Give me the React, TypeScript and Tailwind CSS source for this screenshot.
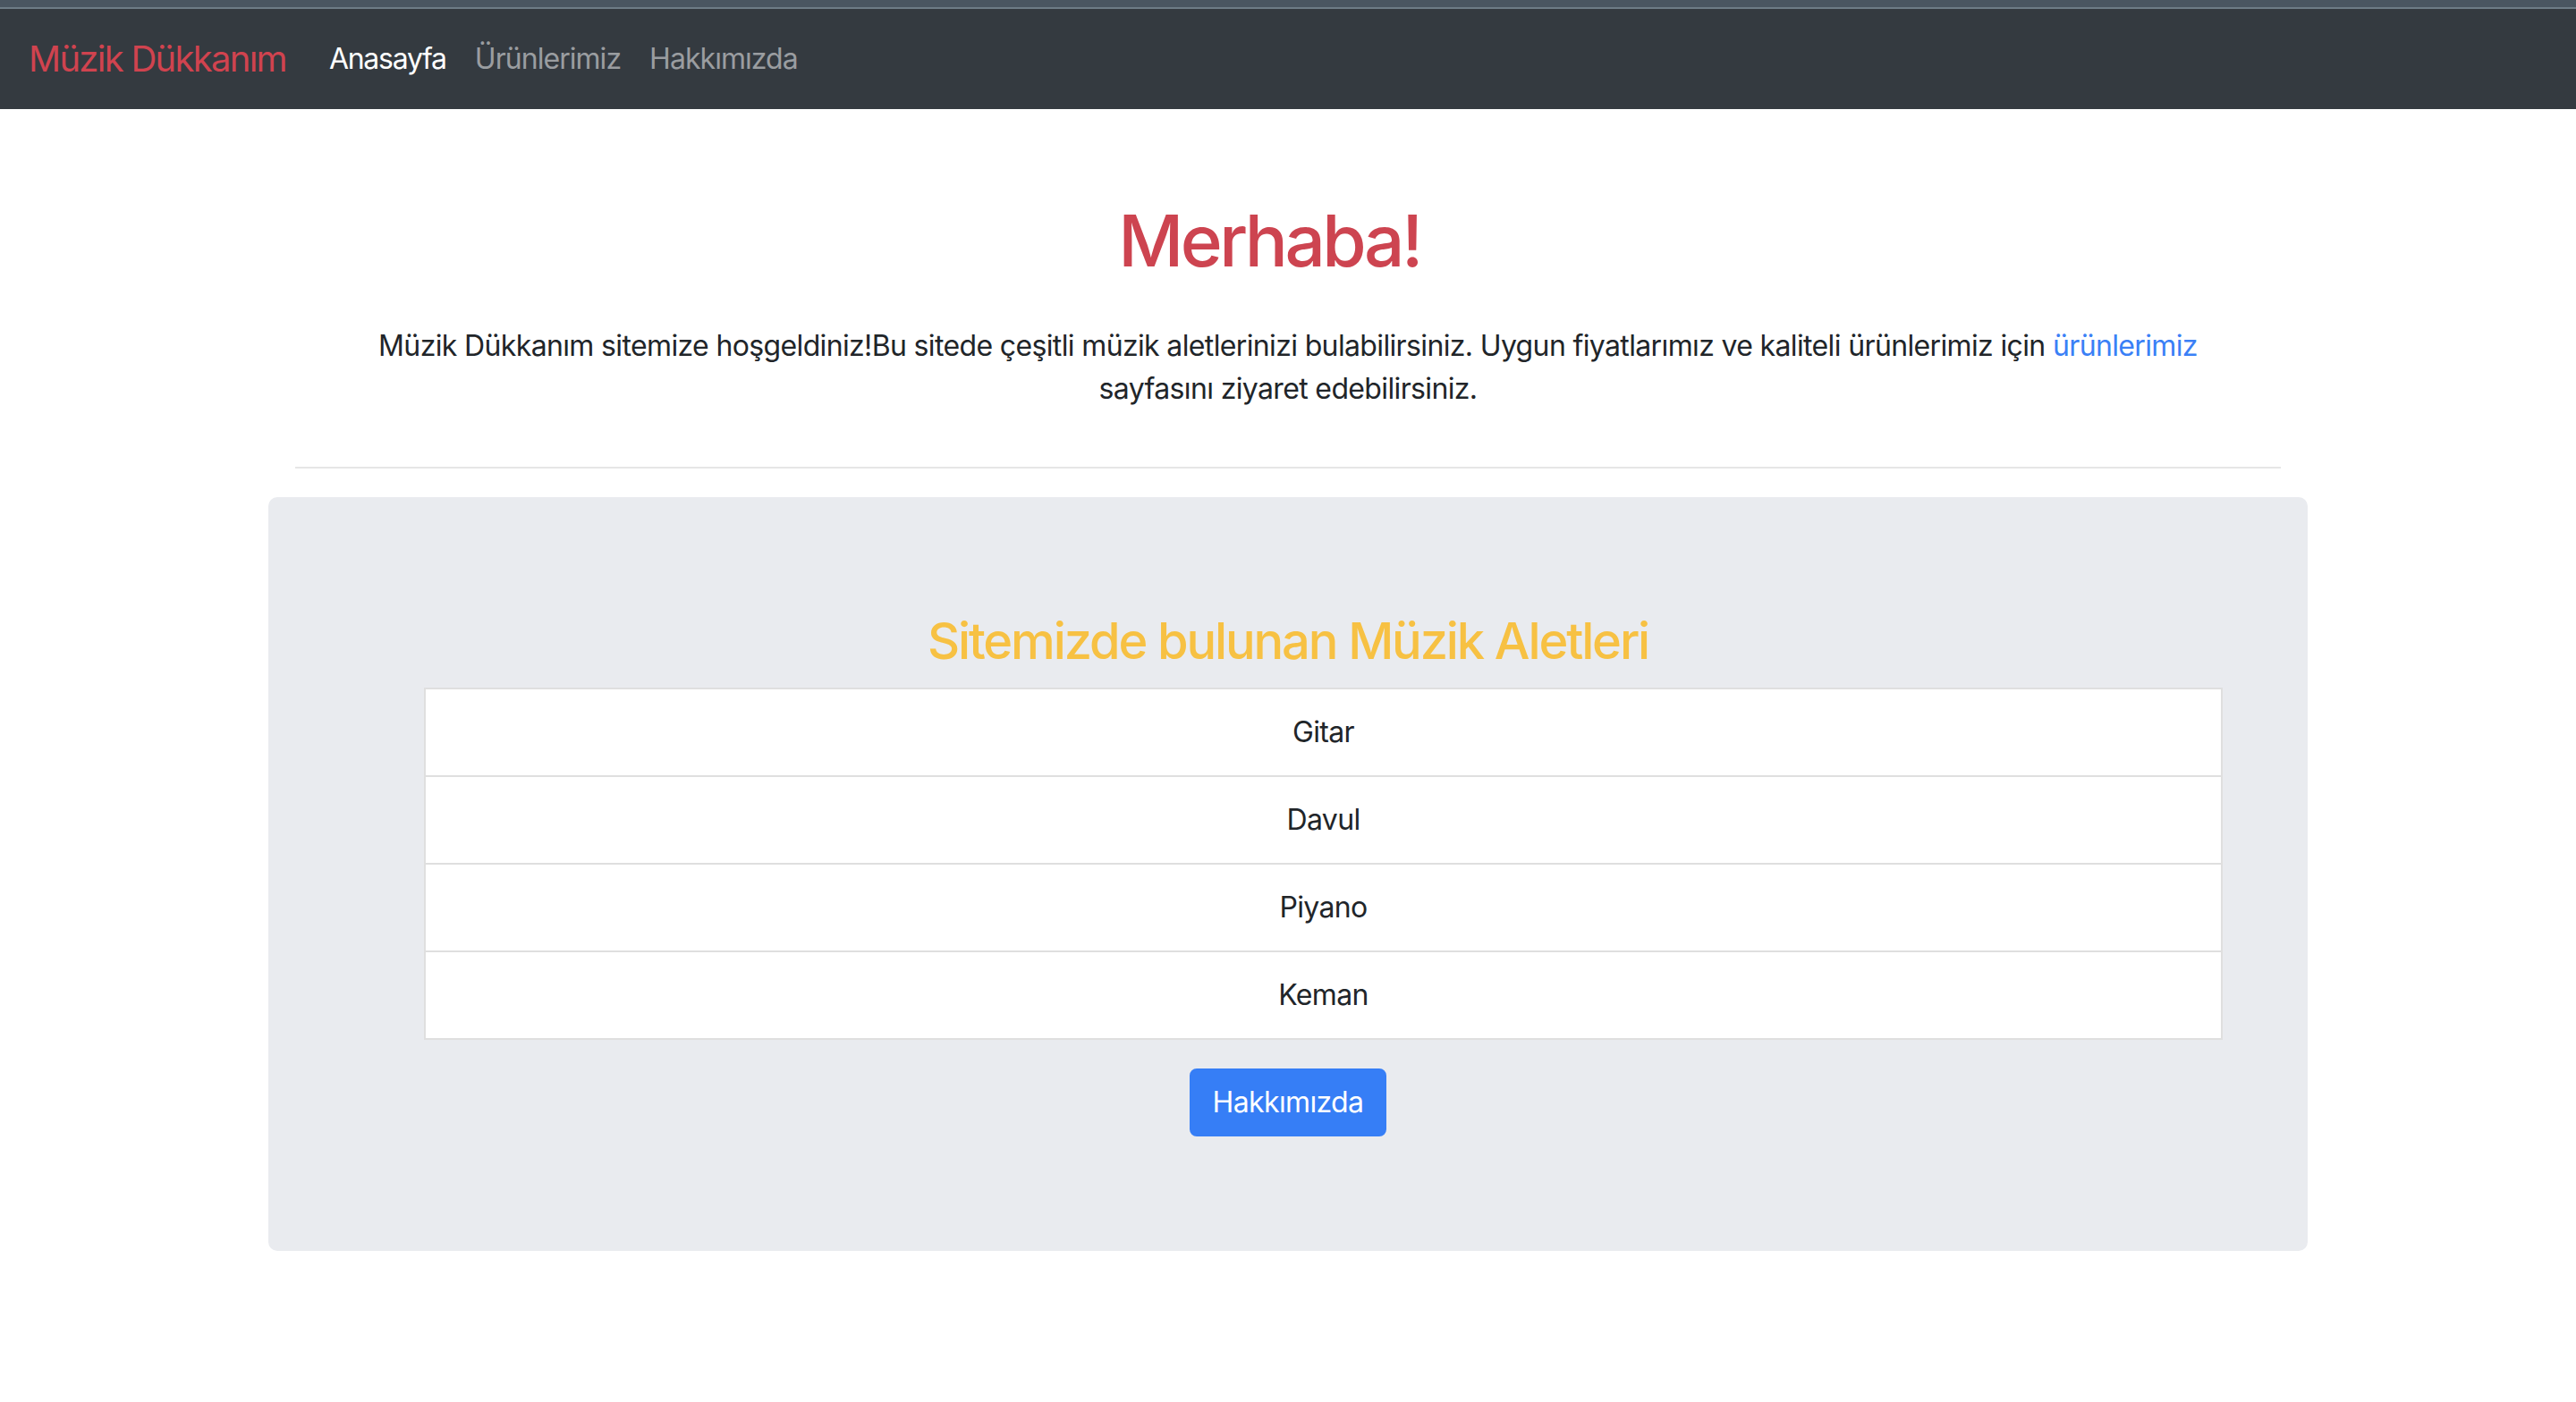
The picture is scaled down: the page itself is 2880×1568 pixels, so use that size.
import type { ReactNode } from 'react';

const navLinks = [
  { label: 'Anasayfa', active: true },
  { label: 'Ürünlerimiz', active: false },
  { label: 'Hakkımızda', active: false },
];

const instruments = ['Gitar', 'Davul', 'Piyano', 'Keman'];

const NavLink = ({ children, active }: { children: ReactNode; active: boolean }) => (
  <li>
    <a
      href="#"
      className={
        active
          ? 'block px-[16px] text-[32px] leading-[48px] tracking-[-0.04em] text-white'
          : 'block px-[16px] text-[32px] leading-[48px] tracking-[-0.03em] text-[#9a9da0]'
      }
    >
      {children}
    </a>
  </li>
);

export default function App() {
  return (
    <div className="min-h-screen bg-white font-['Inter','Liberation_Sans',sans-serif] text-[#212529]">
      <div className="h-[8px] bg-[#4a5661]" />
      <div className="h-[2px] bg-[#6e7c86]" />

      <nav className="flex h-[112px] items-center bg-[#343a40] px-[32px]">
        <a href="#" className="mr-[32px] text-[40px] leading-[60px] tracking-[-0.043em] text-[#d0434f]">
          Müzik Dükkanım
        </a>
        <ul className="flex">
          {navLinks.map((link) => (
            <NavLink key={link.label} active={link.active}>
              {link.label}
            </NavLink>
          ))}
        </ul>
      </nav>

      <main className="mx-auto w-[2280px]">
        <div className="px-[30px] text-center">
          <h1 className="mt-[99px] pr-[42px] text-[80px] font-medium leading-[96px] tracking-[-0.044em] text-[#cd4450]">
            Merhaba!
          </h1>
          <p className="mt-[46px] text-[32px] leading-[48px] tracking-[-0.02em]">
            Müzik Dükkanım sitemize hoşgeldiniz!Bu sitede çeşitli müzik aletlerinizi bulabilirsiniz. Uygun fiyatlarımız
            ve kaliteli ürünlerimiz için{' '}
            <a href="#" className="text-[#3a80f6]">
              ürünlerimiz
            </a>
            <br />
            sayfasını ziyaret edebilirsiniz.
          </p>
          <hr className="mt-[63px] mb-[32px] border-t-2 border-[#e6e6e6]" />
        </div>

        <section className="flex flex-col items-center rounded-[10px] bg-[#e9ebef] px-[64px] py-[128px]">
          <h3 className="mb-[18px] text-[56px] font-medium leading-[67px] tracking-[-0.038em] text-[#f7c143]">
            Sitemizde bulunan Müzik Aletleri
          </h3>
          <div className="w-full pl-[110px] pr-[31px]">
            <ul className="border-2 border-[#dfdfdf] bg-white">
              {instruments.map((name, i) => (
                <li
                  key={name}
                  className={
                    i === 0
                      ? 'py-[24px] text-center text-[32px] leading-[48px] tracking-[-0.02em]'
                      : 'border-t-2 border-[#dfdfdf] py-[24px] text-center text-[32px] leading-[48px] tracking-[-0.02em]'
                  }
                >
                  {name}
                </li>
              ))}
            </ul>
          </div>
          <button
            type="button"
            className="mt-[32px] rounded-[8px] border-2 border-[#367ef6] bg-[#367ef6] px-[24px] py-[12px] text-[32px] leading-[48px] tracking-[-0.02em] text-white"
          >
            Hakkımızda
          </button>
        </section>
      </main>
    </div>
  );
}
